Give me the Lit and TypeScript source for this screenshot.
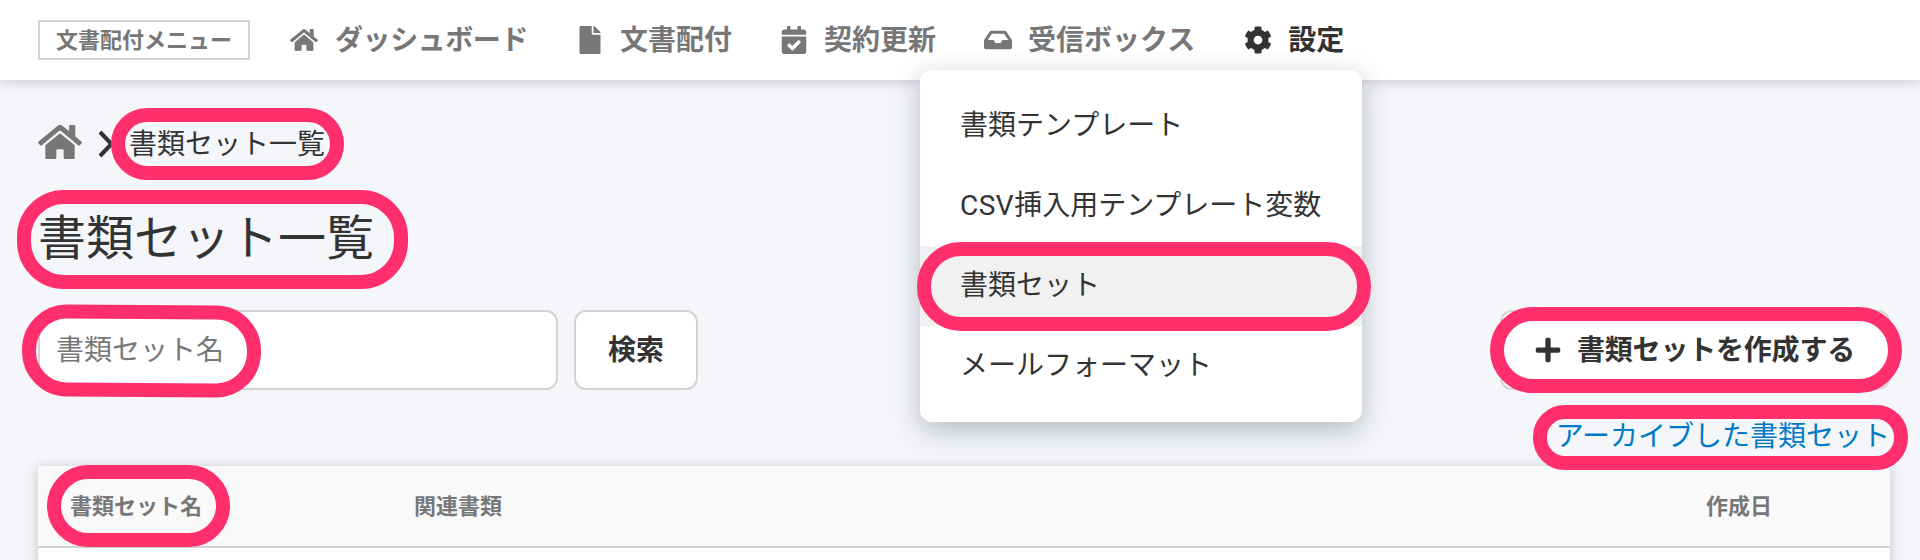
import { LitElement, html, css, svg } from "lit";
import { customElement, property } from "lit/decorators.js";
import { classMap } from "lit/directives/class-map.js";

const ICONS: Record<string, { box: string; body: unknown }> = {
  home: {
    box: "0 0 576 512",
    body: svg`<path d="M280.37 148.26L96 300.11V464a16 16 0 0 0 16 16l112.06-.29a16 16 0 0 0 15.92-16V368a16 16 0 0 1 16-16h64a16 16 0 0 1 16 16v95.64a16 16 0 0 0 16 16.05L464 480a16 16 0 0 0 16-16V300L295.67 148.26a12.19 12.19 0 0 0-15.3 0zM571.6 251.47L488 182.56V44.05a12 12 0 0 0-12-12h-56a12 12 0 0 0-12 12v72.61L318.47 43a48 48 0 0 0-61 0L4.34 251.47a12 12 0 0 0-1.6 16.9l25.5 31A12 12 0 0 0 45.15 301l235.22-193.74a12.19 12.19 0 0 1 15.3 0L530.9 301a12 12 0 0 0 16.9-1.6l25.5-31a12 12 0 0 0-1.7-16.93z"/>`,
  },
  file: {
    box: "0 0 384 512",
    body: svg`<path d="M224 136V0H24C10.7 0 0 10.7 0 24v464c0 13.3 10.7 24 24 24h336c13.3 0 24-10.7 24-24V160H248c-13.200 0-24-10.800-24-24zm160-14.100v6.100H256V0h6.100c6.400 0 12.500 2.500 17 7l97.900 98c4.500 4.500 7 10.600 7 16.900z"/>`,
  },
  calendar: {
    box: "0 0 448 512",
    body: svg`<path d="M436 160H12c-6.627 0-12-5.373-12-12v-36c0-26.510 21.490-48 48-48h48V12c0-6.627 5.373-12 12-12h40c6.627 0 12 5.373 12 12v52h128V12c0-6.627 5.373-12 12-12h40c6.627 0 12 5.373 12 12v52h48c26.510 0 48 21.490 48 48v36c0 6.627-5.373 12-12 12zM12 192h424c6.627 0 12 5.373 12 12v260c0 26.510-21.490 48-48 48H48c-26.510 0-48-21.490-48-48V204c0-6.627 5.373-12 12-12zm333.296 95.947l-28.169-28.398c-4.667-4.705-12.265-4.736-16.970-.068L194.120 364.665l-45.980-46.352c-4.667-4.705-12.266-4.736-16.971-.068l-28.397 28.170c-4.705 4.667-4.736 12.265-.068 16.970l82.601 83.269c4.667 4.705 12.265 4.736 16.970.068l142.953-141.805c4.705-4.667 4.736-12.265.068-16.970z"/>`,
  },
  inbox: {
    box: "0 0 576 512",
    body: svg`<path d="M567.938 243.908L462.250 85.374A48.003 48.003 0 0 0 422.311 64H153.689a48 48 0 0 0-39.938 21.374L8.062 243.908A47.994 47.994 0 0 0 0 270.533V400c0 26.510 21.490 48 48 48h480c26.510 0 48-21.490 48-48V270.533a47.994 47.994 0 0 0-8.062-26.625zM162.252 128h251.497l85.333 128H376l-32 64H232l-32-64H76.918l85.334-128z"/>`,
  },
  gear: {
    box: "0 0 512 512",
    body: svg`<path d="M487.400 315.700l-42.600-24.600c4.300-23.200 4.300-47 0-70.200l42.600-24.600c4.900-2.800 7.100-8.600 5.500-14-11.100-35.600-30-67.800-54.700-94.600-3.800-4.100-10-5.100-14.800-2.300L380.800 110c-17.900-15.400-38.500-27.300-60.800-35.100V25.800c0-5.600-3.900-10.500-9.400-11.700-36.700-8.200-74.300-7.800-109.200 0-5.500 1.200-9.400 6.100-9.400 11.700V75c-22.200 7.900-42.800 19.800-60.800 35.100L88.700 85.500c-4.900-2.800-11-1.900-14.800 2.300-24.700 26.700-43.600 58.900-54.700 94.600-1.700 5.400.6 11.200 5.500 14L67.300 221c-4.300 23.200-4.300 47 0 70.200l-42.600 24.600c-4.900 2.800-7.100 8.600-5.500 14 11.100 35.600 30 67.800 54.700 94.600 3.800 4.100 10 5.100 14.800 2.300l42.600-24.600c17.900 15.400 38.500 27.300 60.800 35.100v49.200c0 5.600 3.900 10.500 9.400 11.700 36.700 8.200 74.300 7.800 109.200 0 5.500-1.200 9.400-6.100 9.400-11.700v-49.200c22.200-7.900 42.800-19.800 60.800-35.100l42.600 24.600c4.900 2.800 11 1.900 14.800-2.300 24.700-26.700 43.600-58.900 54.700-94.600 1.500-5.500-.7-11.300-5.600-14.100zM256 336c-44.100 0-80-35.900-80-80s35.900-80 80-80 80 35.900 80 80-35.900 80-80 80z"/>`,
  },
  plus: {
    box: "0 0 448 512",
    body: svg`<path d="M416 208H272V64c0-17.670-14.330-32-32-32h-32c-17.670 0-32 14.330-32 32v144H32c-17.670 0-32 14.330-32 32v32c0 17.670 14.330 32 32 32h144v144c0 17.670 14.330 32 32 32h32c17.670 0 32-14.330 32-32V304h144c17.670 0 32-14.330 32-32v-32c0-17.670-14.330-32-32-32z"/>`,
  },
  chevron: {
    box: "0 0 20 28",
    body: svg`<path d="M3 2L14.500 14L3 26" fill="none" stroke="currentColor" stroke-width="4"/>`,
  },
};

@customElement("ui-icon")
export class UiIcon extends LitElement {
  @property() name = "home";
  static styles = css`
    :host { display: block; flex: none; width: 28px; height: 28px; }
    svg { display: block; width: 100%; height: 100%; fill: currentColor; }
  `;
  render() {
    const icon = ICONS[this.name];
    return html`<svg viewBox=${icon.box} aria-hidden="true">${icon.body}</svg>`;
  }
}

const NAV = [
  { icon: "home", label: "ダッシュボード" },
  { icon: "file", label: "文書配付" },
  { icon: "calendar", label: "契約更新" },
  { icon: "inbox", label: "受信ボックス" },
  { icon: "gear", label: "設定", active: true },
];

@customElement("app-root")
export class AppRoot extends LitElement {
  static styles = css`
    :host {
      display: block;
      position: relative;
      height: 560px;
      overflow: hidden;
      background: #f4f6fa;
      color: #333;
      font: 28px/40px "Noto Sans CJK JP", sans-serif;
      white-space: nowrap;
    }
    * { box-sizing: border-box; }
    .nav {
      display: flex;
      align-items: center;
      height: 80px;
      padding-left: 38px;
      background: #fff;
      box-shadow: 0 2px 12px rgba(40, 45, 60, 0.22);
      color: #777;
      font-weight: 700;
    }
    .badge {
      height: 40px;
      padding: 0 16px;
      border: 2px solid #d4d4d4;
      font-size: 22px;
      line-height: 33px;
      margin-right: 40px;
    }
    .items { display: flex; gap: 48px; }
    .item { display: flex; align-items: center; gap: 16px; }
    .item:first-child { gap: 17px; letter-spacing: -0.43px; }
    .item.active { color: #333; margin-left: 1px; }
    .label { line-height: 36px; padding-bottom: 4px; }
    .main { padding: 40px 30px 0 38px; }
    .crumbs { display: flex; align-items: center; height: 44px; }
    .crumb-home { width: 44px; height: 40px; color: #777; }
    .sep { width: 20px; height: 28px; margin: 4px 12px 0 15px; }
    .crumb { line-height: 42px; }
    h1 {
      margin: 34px 0 0;
      font-size: 48px;
      font-weight: 400;
      line-height: 72px;
    }
    .tools { display: flex; gap: 16px; margin-top: 40px; }
    .field, .btn {
      height: 80px;
      border: 2px solid #d4d4d4;
      border-radius: 12px;
      background: #fff;
      line-height: 72px;
    }
    .field { width: 520px; padding: 0 16px; color: #777; }
    .btn { display: flex; align-items: center; gap: 15px; padding: 0 32px; font-weight: 700; }
    .create { width: 390px; margin-left: auto; letter-spacing: -0.2px; }
    .archive { display: flex; justify-content: flex-end; margin-top: 24px; color: #007ac8; }
    .table {
      display: grid;
      grid-template-columns: 344px 1292px 1fr;
      grid-template-rows: 82px 60px;
      margin-top: 12px;
      background: #fff;
      box-shadow: 0 2px 12px rgba(40, 45, 60, 0.26);
    }
    .th {
      padding-left: 32px;
      background: #f9f9f9;
      border-bottom: 2px solid #d0d0d0;
      color: #777;
      font-size: 22px;
      font-weight: 700;
      line-height: 76px;
    }
    .menu {
      position: absolute;
      left: 920px;
      top: 70px;
      width: 442px;
      height: 352px;
      padding: 16px 0;
      border-radius: 12px;
      background: #fff;
      box-shadow: 0 8px 28px rgba(40, 45, 60, 0.3);
    }
    .entry { height: 80px; padding-left: 40px; line-height: 75px; }
    .entry.hover { background: #f1f1f1; }
    .latin { font-family: Roboto, sans-serif; letter-spacing: 0.5px; }
    .ring { position: absolute; border: 14px solid #ff2f6d; }
    .r-crumb { left: 111px; top: 108px; width: 233px; height: 72px; border-radius: 36px; }
    .r-title { left: 17px; top: 190px; width: 391px; height: 99px; border-radius: 47px; }
    .r-field { left: 22px; top: 305px; width: 239px; height: 92px; border-radius: 45px; transform: rotate(0.4deg); }
    .r-menu { left: 917px; top: 242px; width: 454px; height: 89px; border-radius: 44px; }
    .r-create { left: 1490px; top: 307px; width: 412px; height: 86px; border-radius: 43px; }
    .r-archive { left: 1533px; top: 405px; width: 375px; height: 65px; border-radius: 32px; }
    .r-column { left: 47px; top: 465px; width: 183px; height: 82px; border-radius: 41px; }
  `;

  render() {
    return html`
      <nav class="nav">
        <div class="badge">文書配付メニュー</div>
        <div class="items">
          ${NAV.map(
            (n) => html`<div class=${classMap({ item: true, active: !!n.active })}>
              <ui-icon name=${n.icon}></ui-icon><span class="label">${n.label}</span>
            </div>`
          )}
        </div>
      </nav>
      <main class="main">
        <div class="crumbs">
          <ui-icon class="crumb-home" name="home"></ui-icon>
          <ui-icon class="sep" name="chevron"></ui-icon>
          <span class="crumb">書類セット一覧</span>
        </div>
        <h1>書類セット一覧</h1>
        <div class="tools">
          <div class="field">書類セット名</div>
          <div class="btn"><span class="label">検索</span></div>
          <div class="btn create"><ui-icon name="plus"></ui-icon><span class="label">書類セットを作成する</span></div>
        </div>
        <div class="archive"><a>アーカイブした書類セット</a></div>
        <div class="table">
          <div class="th">書類セット名</div>
          <div class="th">関連書類</div>
          <div class="th">作成日</div>
        </div>
      </main>
      <div class="menu">
        <div class="entry">書類テンプレート</div>
        <div class="entry"><span class="latin">CSV</span>挿入用テンプレート変数</div>
        <div class="entry hover">書類セット</div>
        <div class="entry">メールフォーマット</div>
      </div>
      ${["crumb", "title", "field", "menu", "create", "archive", "column"].map(
        (r) => html`<div class="ring r-${r}"></div>`
      )}
    `;
  }
}
